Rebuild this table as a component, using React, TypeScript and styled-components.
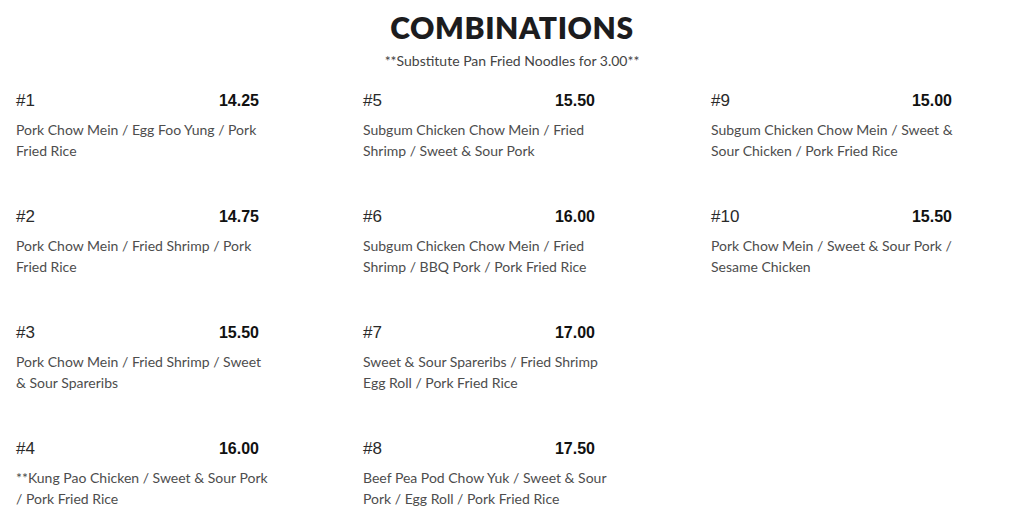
import React from 'react';
import styled, { createGlobalStyle } from 'styled-components';

const GlobalStyle = createGlobalStyle`
  html, body {
    margin: 0;
    padding: 0;
    background: #ffffff;
  }
  body {
    font-family: Lato, 'Liberation Sans', sans-serif;
  }
`;

interface Combo {
  num: string;
  price: string;
  lines: string[];
}

interface MenuColumn {
  headerWidth: number;
  items: Combo[];
}

const columns: MenuColumn[] = [
  {
    headerWidth: 243,
    items: [
      { num: '#1', price: '14.25', lines: ['Pork Chow Mein / Egg Foo Yung / Pork', 'Fried Rice'] },
      { num: '#2', price: '14.75', lines: ['Pork Chow Mein / Fried Shrimp / Pork', 'Fried Rice'] },
      { num: '#3', price: '15.50', lines: ['Pork Chow Mein / Fried Shrimp / Sweet', '& Sour Spareribs'] },
      { num: '#4', price: '16.00', lines: ['**Kung Pao Chicken / Sweet & Sour Pork', '/ Pork Fried Rice'] },
    ],
  },
  {
    headerWidth: 232,
    items: [
      { num: '#5', price: '15.50', lines: ['Subgum Chicken Chow Mein / Fried', 'Shrimp / Sweet & Sour Pork'] },
      { num: '#6', price: '16.00', lines: ['Subgum Chicken Chow Mein / Fried', 'Shrimp / BBQ Pork / Pork Fried Rice'] },
      { num: '#7', price: '17.00', lines: ['Sweet & Sour Spareribs / Fried Shrimp', 'Egg Roll / Pork Fried Rice'] },
      { num: '#8', price: '17.50', lines: ['Beef Pea Pod Chow Yuk / Sweet & Sour', 'Pork / Egg Roll / Pork Fried Rice'] },
    ],
  },
  {
    headerWidth: 241,
    items: [
      { num: '#9', price: '15.00', lines: ['Subgum Chicken Chow Mein / Sweet &', 'Sour Chicken / Pork Fried Rice'] },
      { num: '#10', price: '15.50', lines: ['Pork Chow Mein / Sweet & Sour Pork /', 'Sesame Chicken'] },
    ],
  },
];

const Page = styled.div`
  width: 1024px;
  height: 521px;
  overflow: hidden;
  padding-top: 10px;
  box-sizing: border-box;
`;

const Title = styled.h1`
  margin: 0;
  text-align: center;
  font-family: Lato, 'Liberation Sans', sans-serif;
  font-weight: 800;
  font-size: 30px;
  letter-spacing: 0.6px;
  line-height: 34px;
  color: #1c1c1e;
`;

const Note = styled.p`
  margin: 9px 0 0;
  text-align: center;
  font-size: 14px;
  line-height: 16px;
  color: #444;
`;

const Grid = styled.div`
  display: grid;
  grid-template-columns: 347px 348px 1fr;
  padding-left: 16px;
  margin-top: 21px;
`;

const Column = styled.div`
  display: flex;
  flex-direction: column;
  gap: 32px;
`;

const Card = styled.div`
  display: flex;
  flex-direction: column;
  height: 84px;
`;

const Header = styled.div<{ $width: number }>`
  display: flex;
  justify-content: space-between;
  align-items: baseline;
  width: ${(p) => p.$width}px;
`;

const Num = styled.span`
  font-family: 'Liberation Sans', Arial, sans-serif;
  font-size: 17px;
  line-height: 22px;
  color: #2a2a2a;
`;

const Price = styled.span`
  font-family: 'Liberation Sans', Arial, sans-serif;
  font-weight: 700;
  font-size: 16px;
  color: #111;
`;

const Desc = styled.div`
  margin-top: 7px;
  font-size: 14px;
  line-height: 21px;
  color: #4d4d4d;
  white-space: nowrap;
`;

const Line = styled.div``;

export default function App() {
  return (
    <Page>
      <GlobalStyle />
      <Title>COMBINATIONS</Title>
      <Note>**Substitute Pan Fried Noodles for 3.00**</Note>
      <Grid>
        {columns.map((col, i) => (
          <Column key={i}>
            {col.items.map((c) => (
              <Card key={c.num}>
                <Header $width={col.headerWidth}>
                  <Num>{c.num}</Num>
                  <Price>{c.price}</Price>
                </Header>
                <Desc>
                  {c.lines.map((l) => (
                    <Line key={l}>{l}</Line>
                  ))}
                </Desc>
              </Card>
            ))}
          </Column>
        ))}
      </Grid>
    </Page>
  );
}
